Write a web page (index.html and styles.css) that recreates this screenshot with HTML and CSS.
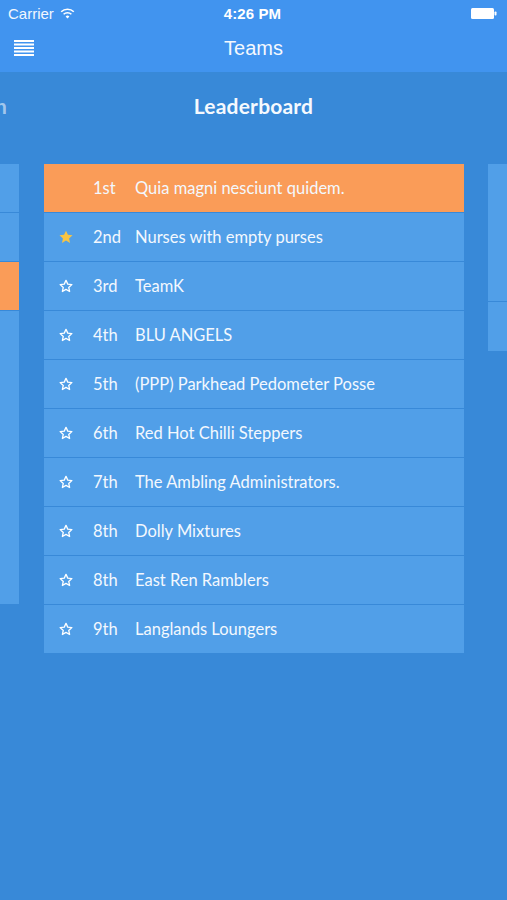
FILE: index.html
```html
<!DOCTYPE html>
<html>
<head>
<meta charset="utf-8">
<link rel="stylesheet" href="styles.css">
</head>
<body>
<div class="screen">
  <header class="topbar">
    <div class="status">
      <div class="status-left">Carrier
        <svg class="wifi" width="15" height="11" viewBox="0 0 15 11"><path d="M7.5 10.5 L5.6 8.4 A2.8 2.8 0 0 1 9.4 8.4 Z" fill="#fff"/><path d="M3.6 6.3 A5.6 5.6 0 0 1 11.4 6.3" stroke="#fff" stroke-width="1.6" fill="none"/><path d="M1.2 3.8 A9 9 0 0 1 13.8 3.8" stroke="#fff" stroke-width="1.6" fill="none"/></svg>
      </div>
      <div class="status-time">4:26 PM</div>
      <div class="status-right">
        <svg width="26" height="11" viewBox="0 0 26 11"><rect x="0" y="0" width="23" height="11" rx="1.5" fill="#fff"/><rect x="23.5" y="3.5" width="2" height="4" rx="0.8" fill="#fff"/></svg>
      </div>
    </div>
    <div class="navbar">
      <svg class="menu" width="20" height="16" viewBox="0 0 20 16"><rect y="0" width="20" height="2" fill="#fff"/><rect y="3.5" width="20" height="2" fill="#fff"/><rect y="7" width="20" height="2" fill="#fff"/><rect y="10.5" width="20" height="2" fill="#fff"/><rect y="14" width="20" height="2" fill="#fff"/></svg>
      <div class="nav-title">Teams</div>
    </div>
  </header>
  <div class="titlerow">
    <div class="peek-clip"><span class="peek-title">Month</span></div>
    <h1 class="title">Leaderboard</h1>
  </div>
  <div class="carousel">
    <div class="peek peek-left">
      <div class="pcell" style="height:48px"></div>
      <div class="pcell" style="height:48px"></div>
      <div class="pcell orange" style="height:48px"></div>
      <div class="pcell" style="height:293px"></div>
    </div>
    <div class="card">
      <div class="row first"><span class="star"></span><span class="rank">1st</span><span class="name">Quia magni nesciunt quidem.</span></div>
      <div class="row"><span class="star"><svg width="16" height="16" viewBox="0 0 24 24"><path d="M12 2.5l2.9 6.3 6.9.7-5.2 4.6 1.5 6.8L12 17.4l-6.1 3.5 1.5-6.8-5.2-4.6 6.9-.7z" fill="#f7c443"/></svg></span><span class="rank">2nd</span><span class="name">Nurses with empty purses</span></div>
      <div class="row"><span class="star"><svg width="16" height="16" viewBox="0 0 24 24"><path d="M12 3.5l2.6 5.7 6.2.7-4.7 4.2 1.3 6.1L12 17.1l-5.4 3.1 1.3-6.1-4.7-4.2 6.2-.7z" fill="none" stroke="#fff" stroke-width="2" stroke-linejoin="round"/></svg></span><span class="rank">3rd</span><span class="name">TeamK</span></div>
      <div class="row"><span class="star"><svg width="16" height="16" viewBox="0 0 24 24"><path d="M12 3.5l2.6 5.7 6.2.7-4.7 4.2 1.3 6.1L12 17.1l-5.4 3.1 1.3-6.1-4.7-4.2 6.2-.7z" fill="none" stroke="#fff" stroke-width="2" stroke-linejoin="round"/></svg></span><span class="rank">4th</span><span class="name">BLU ANGELS</span></div>
      <div class="row"><span class="star"><svg width="16" height="16" viewBox="0 0 24 24"><path d="M12 3.5l2.6 5.7 6.2.7-4.7 4.2 1.3 6.1L12 17.1l-5.4 3.1 1.3-6.1-4.7-4.2 6.2-.7z" fill="none" stroke="#fff" stroke-width="2" stroke-linejoin="round"/></svg></span><span class="rank">5th</span><span class="name">(PPP) Parkhead Pedometer Posse</span></div>
      <div class="row"><span class="star"><svg width="16" height="16" viewBox="0 0 24 24"><path d="M12 3.5l2.6 5.7 6.2.7-4.7 4.2 1.3 6.1L12 17.1l-5.4 3.1 1.3-6.1-4.7-4.2 6.2-.7z" fill="none" stroke="#fff" stroke-width="2" stroke-linejoin="round"/></svg></span><span class="rank">6th</span><span class="name">Red Hot Chilli Steppers</span></div>
      <div class="row"><span class="star"><svg width="16" height="16" viewBox="0 0 24 24"><path d="M12 3.5l2.6 5.7 6.2.7-4.7 4.2 1.3 6.1L12 17.1l-5.4 3.1 1.3-6.1-4.7-4.2 6.2-.7z" fill="none" stroke="#fff" stroke-width="2" stroke-linejoin="round"/></svg></span><span class="rank">7th</span><span class="name">The Ambling Administrators.</span></div>
      <div class="row"><span class="star"><svg width="16" height="16" viewBox="0 0 24 24"><path d="M12 3.5l2.6 5.7 6.2.7-4.7 4.2 1.3 6.1L12 17.1l-5.4 3.1 1.3-6.1-4.7-4.2 6.2-.7z" fill="none" stroke="#fff" stroke-width="2" stroke-linejoin="round"/></svg></span><span class="rank">8th</span><span class="name">Dolly Mixtures</span></div>
      <div class="row"><span class="star"><svg width="16" height="16" viewBox="0 0 24 24"><path d="M12 3.5l2.6 5.7 6.2.7-4.7 4.2 1.3 6.1L12 17.1l-5.4 3.1 1.3-6.1-4.7-4.2 6.2-.7z" fill="none" stroke="#fff" stroke-width="2" stroke-linejoin="round"/></svg></span><span class="rank">8th</span><span class="name">East Ren Ramblers</span></div>
      <div class="row"><span class="star"><svg width="16" height="16" viewBox="0 0 24 24"><path d="M12 3.5l2.6 5.7 6.2.7-4.7 4.2 1.3 6.1L12 17.1l-5.4 3.1 1.3-6.1-4.7-4.2 6.2-.7z" fill="none" stroke="#fff" stroke-width="2" stroke-linejoin="round"/></svg></span><span class="rank">9th</span><span class="name">Langlands Loungers</span></div>
    </div>
    <div class="peek peek-right">
      <div class="pcell" style="height:137px"></div>
      <div class="pcell" style="height:49px"></div>
    </div>
  </div>
</div>
</body>
</html>
```
FILE: styles.css
```css
* { box-sizing: border-box; }
html, body { margin: 0; padding: 0; }
body {
  width: 507px;
  height: 900px;
  background: #3889d8;
  font-family: "Lato", "Open Sans", sans-serif;
  color: #fff;
  overflow: hidden;
}
.screen { width: 507px; height: 900px; display: flex; flex-direction: column; }
.topbar { background: #4194ef; height: 72px; display: flex; flex-direction: column; }
.status {
  height: 27px;
  display: grid;
  grid-template-columns: 1fr auto 1fr;
  align-items: center;
  padding: 0 10px 0 8px;
  font-family: "Liberation Sans", Arial, sans-serif;
  font-size: 15px;
}
.status-left { display: flex; align-items: center; gap: 6px; color: #f2f7fe; }
.status-time { font-weight: bold; letter-spacing: 0.1px; }
.status-right { display: flex; justify-content: flex-end; }
.navbar {
  flex: 1;
  display: grid;
  grid-template-columns: 60px 1fr 60px;
  align-items: center;
  padding-bottom: 3px;
}
.menu { margin-left: 14px; }
.nav-title {
  text-align: center;
  font-family: "Liberation Sans", Arial, sans-serif;
  font-size: 20px;
  color: #f4f8fe;
}
.titlerow {
  height: 92px;
  display: flex;
  justify-content: center;
  align-items: flex-start;
  position: relative;
}
.peek-clip {
  position: absolute;
  left: 0;
  top: 21px;
  width: 8px;
  height: 30px;
  overflow: hidden;
}
.peek-title {
  display: block;
  margin-left: -56px;
  font-size: 21px;
  font-weight: 700;
  color: rgba(255,255,255,0.55);
  white-space: nowrap;
}
.title {
  margin: 21px 0 0;
  font-size: 21px;
  font-weight: 700;
  color: #f5f9fe;
  letter-spacing: 0.2px;
}
.carousel { display: flex; align-items: flex-start; }
.peek { width: 19px; display: flex; flex-direction: column; gap: 1px; }
.pcell { background: #519fe8; }
.pcell.orange { background: #fa9c58; }
.card {
  width: 420px;
  margin: 0 24px 0 25px;
  display: flex;
  flex-direction: column;
  gap: 1px;
}
.row {
  height: 48px;
  background: #519fe8;
  display: flex;
  align-items: center;
  font-size: 16.5px;
  color: #f3f8fe;
}
.row.first { background: #fa9c58; }
.star { width: 49px; display: flex; justify-content: flex-start; padding-left: 14px; }
.star svg { display: block; }
.rank { width: 42px; }
.name { white-space: nowrap; }
```
